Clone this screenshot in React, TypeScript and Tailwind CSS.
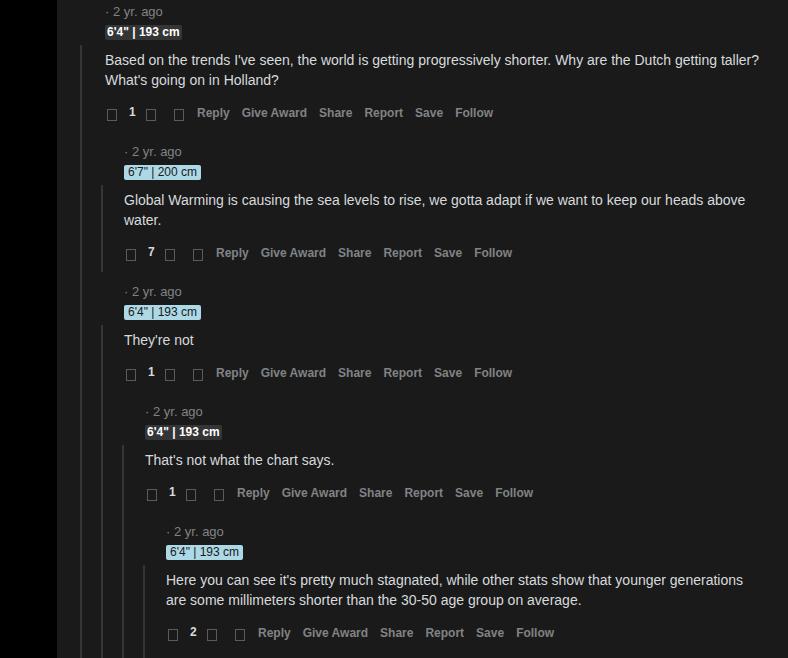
import React from "react";

interface CommentData {
  time: string;
  flair: string;
  flairKind: "dark" | "blue";
  body: string;
  votes: number;
  replies?: CommentData[];
}

const thread: CommentData = {
  time: "2 yr. ago",
  flair: `6'4" | 193 cm`,
  flairKind: "dark",
  body: "Based on the trends I've seen, the world is getting progressively shorter. Why are the Dutch getting taller? What's going on in Holland?",
  votes: 1,
  replies: [
    {
      time: "2 yr. ago",
      flair: `6'7" | 200 cm`,
      flairKind: "blue",
      body: "Global Warming is causing the sea levels to rise, we gotta adapt if we want to keep our heads above water.",
      votes: 7,
    },
    {
      time: "2 yr. ago",
      flair: `6'4" | 193 cm`,
      flairKind: "blue",
      body: "They're not",
      votes: 1,
      replies: [
        {
          time: "2 yr. ago",
          flair: `6'4" | 193 cm`,
          flairKind: "dark",
          body: "That's not what the chart says.",
          votes: 1,
          replies: [
            {
              time: "2 yr. ago",
              flair: `6'4" | 193 cm`,
              flairKind: "blue",
              body: "Here you can see it's pretty much stagnated, while other stats show that younger generations are some millimeters shorter than the 30-50 age group on average.",
              votes: 2,
            },
          ],
        },
      ],
    },
  ],
};

// missing icon-font glyphs render as empty boxes in the original
function Tofu({ className = "" }: { className?: string }) {
  return <span className={`block h-[12px] w-[10px] border border-[#5a5b5c] ${className}`} />;
}

function Actions({ votes }: { votes: number }) {
  const labels = ["Reply", "Give Award", "Share", "Report", "Save", "Follow"];
  return (
    <div className="flex h-6 items-center text-xs font-bold text-[#818384]">
      <Tofu className="ml-[2px] translate-y-[2px]" />
      <span className="ml-[12px] w-[7px] -translate-y-[1px] text-[#d7dadc]">{votes}</span>
      <Tofu className="ml-[10px] translate-y-[2px]" />
      <Tofu className="ml-[18px] translate-y-[2px]" />
      <div className="ml-[13px] flex items-center gap-3">
        {labels.map((l) => (
          <span key={l}>{l}</span>
        ))}
      </div>
    </div>
  );
}

function Comment({ c, depth, tail }: { c: CommentData; depth: number; tail?: boolean }) {
  const pad = depth === 0 ? "pl-[25px]" : "pl-[23px]";
  const innerPad = depth === 0 ? "pl-[23px]" : "pl-[21px]";
  const flairCls =
    c.flairKind === "dark"
      ? "bg-[#343536] px-[2px] font-bold text-white"
      : "bg-[#add8e6] px-1 text-[#1a1a1b]";

  return (
    <div>
      <div className={`${pad} text-[13px] leading-4 text-[#818384]`}>· {c.time}</div>
      <div className={`${pad} mt-[5px] flex`}>
        <span className={`h-[15px] rounded-[2px] text-xs leading-[15px] ${flairCls}`}>{c.flair}</span>
      </div>
      <div className="mt-[5px] flex">
        <div className="w-[2px] shrink-0 bg-[#343536]" />
        <div className="min-w-0 flex-1">
          <p className={`${innerPad} pt-[5px] text-sm leading-5 text-[#d7dadc]`}>{c.body}</p>
          <div className={`${innerPad} mt-[11px]`}>
            <Actions votes={c.votes} />
          </div>
          <div className={tail ? "h-10" : "h-[7px]"} />
          {c.replies && (
            <div className="pl-[19px]">
              {c.replies.map((r, i) => (
                <div key={i} className="mt-3">
                  <Comment c={r} depth={depth + 1} tail={!r.replies && i === c.replies!.length - 1 && depth >= 2} />
                </div>
              ))}
            </div>
          )}
        </div>
      </div>
    </div>
  );
}

export default function App() {
  return (
    <div className="flex h-[658px] w-[788px] overflow-hidden bg-[#1a1a1b] font-['Liberation_Sans',Arial,sans-serif]">
      <div className="w-[57px] shrink-0 bg-black" />
      <div className="min-w-0 flex-1 pl-[23px] pr-[26px] pt-1">
        <Comment c={thread} depth={0} />
      </div>
    </div>
  );
}
